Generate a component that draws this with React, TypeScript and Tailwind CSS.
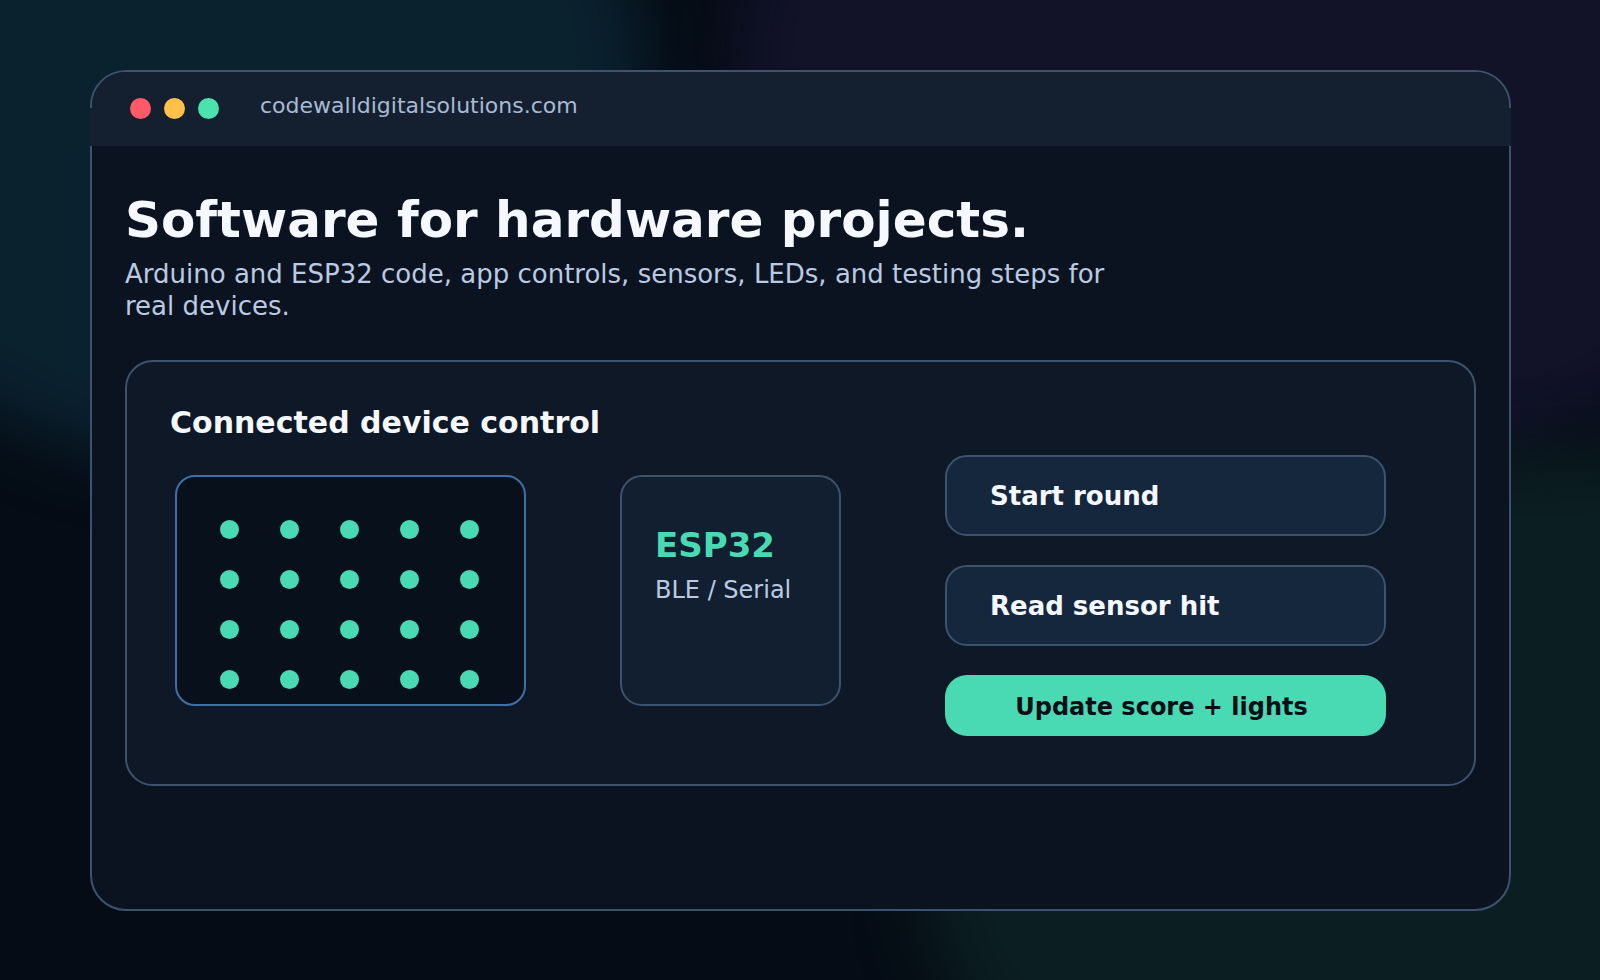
import React from 'react';

const trafficLights = ['bg-[#ff5a69]', 'bg-[#ffc14a]', 'bg-[#4be2ad]'];

const Backdrop: React.FC = () => (
  <svg className="absolute inset-0 w-full h-full" viewBox="0 0 1600 980" preserveAspectRatio="none" aria-hidden="true">
    <defs>
      <filter id="soft" x="-20%" y="-20%" width="140%" height="140%" colorInterpolationFilters="sRGB">
        <feGaussianBlur stdDeviation="32" />
      </filter>
    </defs>
    <ellipse cx="210" cy="80" rx="435" ry="385" fill="#0a212e" filter="url(#soft)" />
    <ellipse cx="1290" cy="70" rx="555" ry="410" fill="#121229" filter="url(#soft)" />
    <ellipse cx="1620" cy="860" rx="700" ry="410" fill="#0b1e21" filter="url(#soft)" />
  </svg>
);

const TitleBar: React.FC = () => (
  <header className="relative h-[74px] px-[38px] pb-[1px] flex items-center rounded-t-[34px] bg-[#142030] before:absolute before:content-[''] before:top-9 before:bottom-0 before:-left-0.5 before:w-0.5 before:bg-[#142030] after:absolute after:content-[''] after:top-9 after:bottom-0 after:-right-0.5 after:w-0.5 after:bg-[#142030]">
    <div className="flex gap-[13px]">
      {trafficLights.map((color) => (
        <span key={color} className={`w-[21px] h-[21px] rounded-full ${color}`} />
      ))}
    </div>
    <span className="ml-[41px] pb-1.5 text-[22px] leading-7 text-[#a8bad3]">codewalldigitalsolutions.com</span>
  </header>
);

const LedMatrix: React.FC = () => (
  <div className="w-[351px] h-[231px] pl-[43px] pt-[43px] rounded-[20px] border-2 border-[#3e6fa6] bg-[#08101c] grid grid-cols-[repeat(5,19px)] auto-rows-[19px] gap-x-[41px] gap-y-[31px]">
    {Array.from({ length: 20 }, (_, i) => (
      <span key={i} className="rounded-full bg-[#4adab3]" />
    ))}
  </div>
);

const BoardCard: React.FC = () => (
  <div className="w-[221px] h-[231px] px-[33px] pt-12 rounded-[22px] border-2 border-[#3c526d] bg-[#121f30]">
    <p className="text-[34px] leading-10 font-bold text-[#4adab3]">ESP32</p>
    <p className="mt-[7px] text-[24px] leading-9 text-[#bacae2]">BLE / Serial</p>
  </div>
);

const Actions: React.FC = () => (
  <div className="w-[441px] flex flex-col gap-[29px]">
    {['Start round', 'Read sensor hit'].map((label) => (
      <button key={label} type="button" className="h-[81px] px-[43px] rounded-[22px] border-2 border-[#3c526d] bg-[#15273d] text-left text-[26px] leading-8 font-bold text-[#f6f8ff]">
        {label}
      </button>
    ))}
    <button type="button" className="h-[61px] pt-0.5 pr-2 rounded-[22px] bg-[#4adab3] text-center text-[24px] leading-8 font-bold text-[#030e16]">
      Update score + lights
    </button>
  </div>
);

const App: React.FC = () => (
  <div className="relative min-h-screen bg-[#050c15] pl-[90px] pt-[70px] pb-[69px] pr-[89px] flex flex-col font-['DejaVu_Sans',sans-serif]">
    <Backdrop />
    <main className="relative flex-1 flex flex-col rounded-[36px] border-2 border-[#3c526d] bg-[#0c1320]">
      <TitleBar />
      <div className="px-[33px] pt-11">
        <h1 className="text-[50px] leading-[60px] font-bold text-[#f6f8ff]">Software for hardware projects.</h1>
        <p className="mt-2 max-w-[1000px] text-[26px] leading-8 text-[#bacae2]">
          Arduino and ESP32 code, app controls, sensors, LEDs, and testing steps for real devices.
        </p>

        <section className="mt-[38px] h-[426px] pt-[43px] pl-[43px] pr-[88px] rounded-[28px] border-2 border-[#3c526d] bg-[#0e1826]">
          <h2 className="text-[30px] leading-9 font-bold text-[#f6f8ff]">Connected device control</h2>
          <div className="pl-[5px] mt-[14px] flex justify-between">
            <div className="pt-5 flex gap-[94px]">
              <LedMatrix />
              <BoardCard />
            </div>
            <Actions />
          </div>
        </section>
      </div>
    </main>
  </div>
);

export default App;
